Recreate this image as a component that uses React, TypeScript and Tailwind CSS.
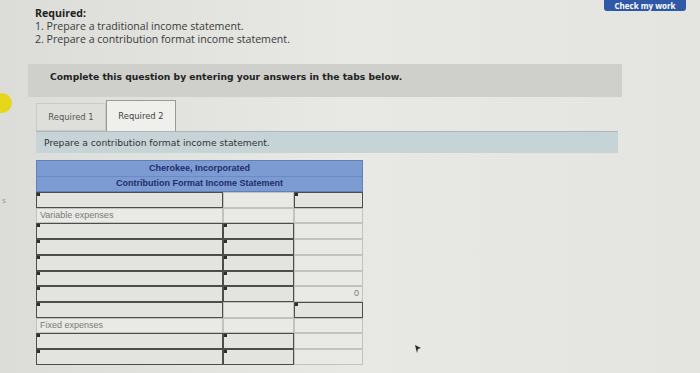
import type { FC } from "react";

type CellKind = "input" | "plain";

interface RowSpec {
    label?: string;
    cells: [CellKind, CellKind, CellKind];
    value?: string;
}

const rows: RowSpec[] = [
    { cells: ["input", "plain", "input"] },
    { label: "Variable expenses", cells: ["plain", "plain", "plain"] },
    { cells: ["input", "input", "plain"] },
    { cells: ["input", "input", "plain"] },
    { cells: ["input", "input", "plain"] },
    { cells: ["input", "input", "plain"] },
    { cells: ["input", "input", "plain"], value: "0" },
    { cells: ["input", "plain", "input"] },
    { label: "Fixed expenses", cells: ["plain", "plain", "plain"] },
    { cells: ["input", "input", "plain"] },
    { cells: ["input", "input", "plain"] },
];

const Cell: FC<{ kind: CellKind; text?: string; align?: "left" | "right" }> = ({ kind, text, align }) => {
    if (kind === "input") {
        return (
            <div className="relative h-full border-[1.5px] border-[#4d4d4b] bg-[#e3e3e0]">
                <div className="absolute left-0 top-0 w-[3px] h-[3px] bg-[#2e2e2e]"></div>
            </div>
        );
    }
    return (
        <div
            className={`h-full border border-[#c2c2bf] bg-[#e9e9e6] flex items-center px-[3px] text-[9px] text-[#7a7a78] ${
                align === "right" ? "justify-end" : "justify-start"
            }`}
        >
            {text}
        </div>
    );
};

const App: FC = () => {
    return (
        <div className="relative w-[700px] h-[373px] overflow-hidden bg-gradient-to-r from-[#dcdcd8] via-[#e8e8e5] to-[#e4e4e0]" style={{ fontFamily: "'Open Sans', Lato, sans-serif" }}>
            {/* header */}
            <div className="flex">
                <div className="pl-[35px] pt-[7px] text-[10.6px] leading-[13px] text-[#3a3a3a]">
                    <div className="font-bold text-[#222]">Required:</div>
                    <div>1. Prepare a traditional income statement.</div>
                    <div>2. Prepare a contribution format income statement.</div>
                </div>
                <button className="ml-auto mr-[14px] h-[11px] w-[82px] rounded-b-[3px] bg-[#2f58a6] text-white text-[8px] leading-[10px] font-bold flex items-center justify-center">
                    Check my work
                </button>
            </div>

            <div className="pl-[28px] pt-[18px] w-[622px]" style={{ fontFamily: "'DejaVu Sans', Verdana, sans-serif" }}>
                <div className="h-[33px] bg-[#cfcfcb] pl-[22px] pt-[6px] text-[9.2px] font-bold text-[#222]">
                    Complete this question by entering your answers in the tabs below.
                </div>

                <div className="pl-[8px] pr-[4px]">
                    {/* tabs */}
                    <div className="flex items-end mt-[3px] h-[31px]">
                        <div className="w-[70px] h-[28px] border border-[#c9c9c5] bg-[#dededa] flex items-center justify-center text-[8.4px] text-[#555]">
                            Required 1
                        </div>
                        <div className="w-[70px] h-[31px] border border-[#9a9a96] border-b-0 bg-[#efefec] flex items-center justify-center text-[8.4px] text-[#444]">
                            Required 2
                        </div>
                    </div>
                    <div className="h-[22px] bg-[#c6d3d7] border-t border-[#aab7bb] flex items-center pl-[8px] text-[9.2px] text-[#333]">
                        Prepare a contribution format income statement.
                    </div>

                    {/* table */}
                    <div className="mt-[7px] w-[327px]" style={{ fontFamily: "'Liberation Sans', Arial, sans-serif" }}>
                        <div className="h-[32px] bg-[#7c9bd3] border border-[#5f7fbd] flex flex-col text-[9px] font-bold text-[#1e2d6a]">
                            <div className="flex-1 flex items-center justify-center border-b border-[#6a8ac6]">Cherokee, Incorporated</div>
                            <div className="flex-1 flex items-center justify-center">Contribution Format Income Statement</div>
                        </div>
                        <div className="grid grid-cols-[187px_71px_69px] auto-rows-[15.73px]">
                            {rows.map((row, i) => (
                                <div key={i} className="contents">
                                    <Cell kind={row.cells[0]} text={row.label} />
                                    <Cell kind={row.cells[1]} />
                                    <Cell kind={row.cells[2]} text={row.value} align="right" />
                                </div>
                            ))}
                        </div>
                    </div>
                </div>
            </div>

            {/* overlays from the photo */}
            <div className="absolute left-[-8px] top-[93px] w-[20px] h-[20px] rounded-full bg-[#e6d61c]"></div>
            <div className="absolute left-[2px] top-[194px] text-[8px] text-[#9a9a96]">s</div>
            <svg className="absolute left-[414px] top-[344px]" width="8" height="10" viewBox="0 0 8 10">
                <path d="M1 1 L7 4 L4 5 L3 9 Z" fill="#2b2b2b" />
            </svg>
        </div>
    );
};

export default App;
